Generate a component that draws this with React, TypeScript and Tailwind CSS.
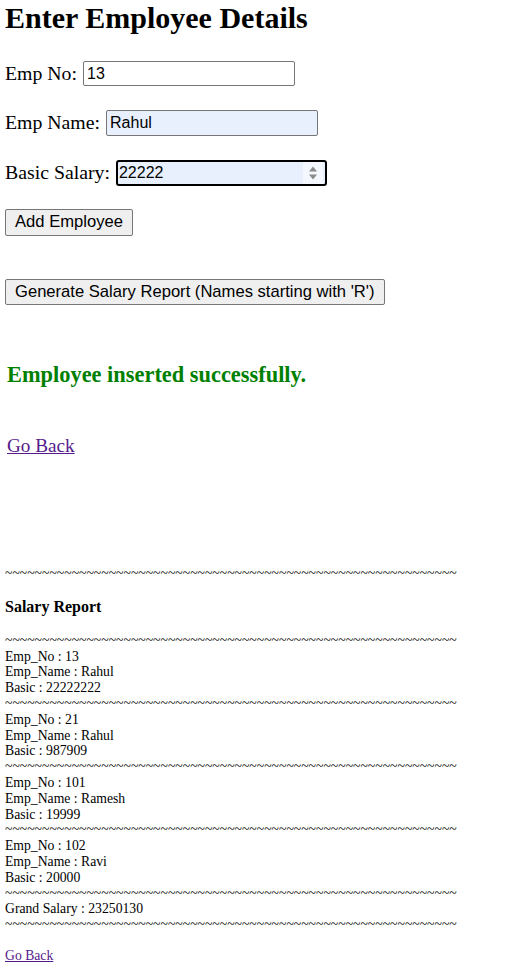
import React from 'react';

const TILDES = '~'.repeat(61);

const employees = [
  { no: 13, name: 'Rahul', basic: 22222222 },
  { no: 21, name: 'Rahul', basic: 987909 },
  { no: 101, name: 'Ramesh', basic: 19999 },
  { no: 102, name: 'Ravi', basic: 20000 },
];

function Rule() {
  return <div className="h-[15.8px] whitespace-nowrap overflow-hidden">{TILDES}</div>;
}

function Line({ children }: { children: React.ReactNode }) {
  return <div className="h-[15.8px] whitespace-nowrap">{children}</div>;
}

export default function App() {
  const grand = employees.reduce((s, e) => s + e.basic, 0);

  return (
    <div className="min-h-[977px] bg-white pl-[5px] font-['Liberation_Serif',serif] text-black">
      <h1 className="text-[30px] font-bold leading-[36px]">Enter Employee Details</h1>

      <form className="font-['Liberation_Sans',Arial,sans-serif]">
        <div className="mt-[25px] flex h-[25px] items-center gap-[6px]">
          <label className="font-['Liberation_Serif',serif] text-[19.8px]">Emp No:</label>
          <input
            readOnly
            value="13"
            className="h-[25px] w-[212px] rounded-[2px] border border-[#767676] bg-white px-[3px] text-[16px] outline-none"
          />
        </div>

        <div className="mt-[24px] flex h-[26px] items-center gap-[6px]">
          <label className="font-['Liberation_Serif',serif] text-[19.8px]">Emp Name:</label>
          <input
            readOnly
            value="Rahul"
            className="h-[26px] w-[212px] rounded-[2px] border border-[#767676] bg-[#e8f0fe] px-[3px] text-[16px] outline-none"
          />
        </div>

        <div className="mt-[24px] flex h-[26px] items-center gap-[6px]">
          <label className="font-['Liberation_Serif',serif] text-[19.8px]">Basic Salary:</label>
          <div className="flex h-[26px] w-[211px] items-stretch rounded-[3px] border-2 border-black bg-[#e8f0fe]">
            <input
              readOnly
              value="22222"
              className="min-w-0 flex-1 bg-transparent px-[1px] text-[16px] outline-none"
            />
            <div className="mr-[2px] flex w-[20px] items-center justify-center bg-[#f4f7fd]">
              <svg width="10" height="16" viewBox="0 0 10 16">
                <path d="M5 1.5 L9 6.5 L1 6.5 Z" fill="#8a8a8a" />
                <path d="M5 14.5 L9 9.5 L1 9.5 Z" fill="#8a8a8a" />
              </svg>
            </div>
          </div>
        </div>

        <button
          type="button"
          className="mt-[23px] block h-[27px] rounded-[2px] border border-[#767676] bg-[#efefef] px-[9px] text-[16.6px] leading-none"
        >
          Add Employee
        </button>

        <button
          type="button"
          className="mt-[43px] block h-[26px] rounded-[2px] border border-[#767676] bg-[#efefef] px-[9px] text-[16.6px] leading-none"
        >
          Generate Salary Report (Names starting with 'R')
        </button>
      </form>

      <h3 className="ml-[2px] mt-[57px] text-[22.4px] font-bold leading-[26px] text-[#008000]">
        Employee inserted successfully.
      </h3>

      <a href="#" className="ml-[2px] mt-[47px] block w-fit text-[19.2px] leading-[22px] text-[#551a8b] underline">
        Go Back
      </a>

      <section className="mt-[109px] text-[13.7px] leading-[15.8px]">
        <Rule />
        <h4 className="mb-[17px] mt-4 text-[16px] font-bold leading-[18px]">Salary Report</h4>
        <Rule />
        {employees.map((e) => (
          <div key={e.no}>
            <Line>Emp_No : {e.no}</Line>
            <Line>Emp_Name : {e.name}</Line>
            <Line>Basic : {e.basic}</Line>
            <Rule />
          </div>
        ))}
        <Line>Grand Salary : {grand}</Line>
        <Rule />
        <a href="#" className="mt-[15px] block w-fit text-[#551a8b] underline">
          Go Back
        </a>
      </section>
    </div>
  );
}
